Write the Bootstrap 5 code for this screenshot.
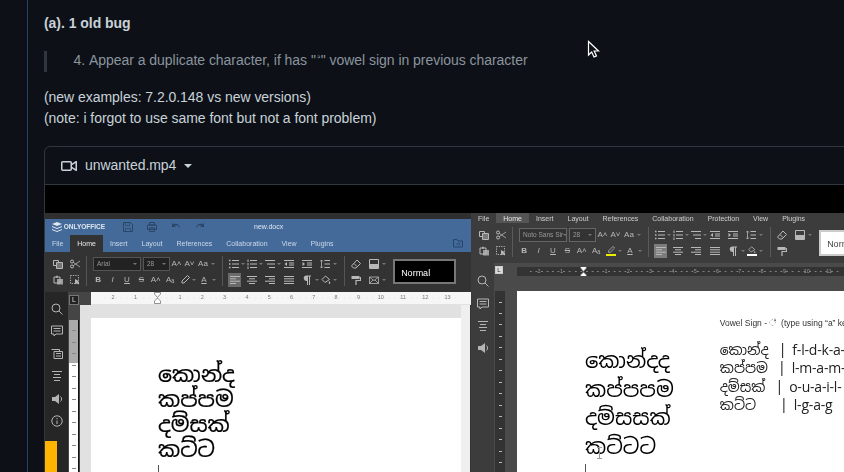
<!doctype html>
<html lang="en"><head><meta charset="utf-8">
<link href="https://cdn.jsdelivr.net/npm/bootstrap@5.3.0/dist/css/bootstrap.min.css" rel="stylesheet">
<style>
html,body{height:472px;overflow:hidden}
body{background:#0d1117;color:#c9d1d9;font:14px/21px "Liberation Sans",sans-serif;letter-spacing:-.04px}
.shell{position:relative;height:472px;margin-left:27px;border-left:1px solid #24426e;padding:13px 0 0 16px;overflow:hidden}
.doc{width:900px}
.doc p{margin:0 0 17px}
.lede{font-weight:700}
.quote{display:flow-root;border-left:3.5px solid #30363d;padding-left:14px;margin:0 0 15px;color:#8b949e}
.quote ol{margin:-1px 0 1px;padding-left:28px}
.hal{line-height:1;font-size:12px;letter-spacing:0;display:inline-block;height:12px;margin:0 1px;vertical-align:baseline;overflow:visible}
.vbox{border:1px solid #30363d;border-radius:6px 6px 0 0;overflow:hidden}
.vhead{height:38px;padding:0 16px;border-bottom:1px solid #30363d}
.vhead svg{width:16px;height:16px;fill:#c9d1d9}
.dcaret{width:0;height:0;border:4px solid transparent;border-top-color:#c9d1d9;border-bottom:0}
.vid{background:#000;height:287px;padding-top:28px;overflow:hidden;filter:blur(.45px);letter-spacing:0}
.win{--bar:#333;--fg:#b8b8b8;--side:#262626;--rbg:#454545;--gut:#e1e1e1;--band:#f6f6f6;--rtx:#777;--sep:#555;flex:none;display:flex;flex-direction:column;font-size:7px;line-height:1;color:var(--fg);overflow:hidden}
.wa{width:426px;background:#333}
.wb{width:420px;--bar:#3c3c3c;--side:#3c3c3c;--rbg:#4a4a4a;--gut:#4a4a4a;--band:#333;--rtx:#999;--sep:#5a5a5a;background:#3c3c3c}
.strip{height:6px;background:#2f2f2f}
.ttl{height:16px;background:#446a9a;color:#dfe7f0;flex:none}
.brand{width:64px;margin-left:7px;font-weight:700;font-size:6.5px;white-space:nowrap}
.ttl svg{width:10px;height:10px;flex:none}
.qa{width:24px;text-align:center;flex:none;color:#2b4566}
.fname{margin-left:42px}
.tabs{height:17px;background:#446a9a;padding-left:7px;gap:14px;color:#cbd8e8;flex:none}
.wb .tabs{height:10px;background:#3c3c3c;color:#cfcfcf;overflow:hidden}
.tab{height:100%;display:flex;align-items:center;white-space:nowrap}
.tab-on{background:#333;color:#e8e8e8;padding:0 7px;margin:0 -7px}
.wb .tab-on{background:#555}
.fold{margin-left:auto;margin-right:8px;width:10px;height:10px;color:#24466f}
.tb{height:40px;background:var(--bar);flex:none;align-items:flex-start}
.sepv{width:1px;height:30px;margin-top:4px;background:var(--sep);flex:none}
.sep-a{margin-left:3px}
.sep-b{margin-left:6px}
.grp{padding-top:5px;flex:none}
.grp-b{margin-left:4px}
.grp-c{margin-left:5px}
.rw{display:flex;height:14px;margin-bottom:2px;align-items:center}
.ce{flex:none;display:flex;align-items:center;justify-content:center;height:14px;font-size:8px;white-space:nowrap}
.ce svg{width:10px;height:10px}
.w4{width:4px}.w5{width:5px}.w6{width:6px}.w12{width:12px}.w13{width:13px}.w14{width:14px}.w14b{width:14.4px}.w17{width:17px}
.ct{width:0;height:0;border:2px solid transparent;border-top-color:#777;border-bottom:0}
.cmb{height:14px;background:#222;border:1px solid #555;flex:none;display:flex;align-items:center;justify-content:space-between;padding:0 3px;color:#999;font-size:6.5px;overflow:hidden;white-space:nowrap}
.wb .cmb{background:#333;border-color:#666}
.cmb1{width:48px;margin:0 2px}.cmb2{width:27px;margin-right:0}
.act{background:#6a6a6a}
.wb .act{background:#7c7c7c}
.hiy svg{border-bottom:2px solid #ee0}
.hiw svg{border-bottom:2px solid #fff}
.stylebox{flex:none;width:63px;height:25px;margin:7px 0 0 6px;background:#000;border:2px solid #777;color:#fff;font-size:9px;padding:8px 0 0 6px}
.wb .stylebox{background:#fff;border-color:#ccc;color:#444;height:26px;width:60px}
.ws{flex:1 1 auto;min-height:0}
.sb{width:23px;flex:none;background:var(--side);padding-top:6px;display:flex;flex-direction:column}
.wb .sb{padding-top:7px}
.sbi{height:22.4px;display:flex;align-items:center;justify-content:center;flex:none;color:#b5b5b5}
.sbi svg{width:12px;height:12px}
.yel{margin-top:auto;width:12px;height:31px;background:#ffb400;flex:none}
.rt{flex:1 1 auto;display:flex;flex-direction:column;min-width:0}
.rrow{height:13px;display:flex;flex:none;background:var(--gut)}
.corner{width:23px;flex:none;background:var(--rbg);padding:3px 0 0 1px}
.lmark{width:10px;height:10px;background:#222;border:1px solid #777;color:#ddd;font-size:7px;line-height:8px;text-align:center;display:block}
.wb .lmark{background:#ddd;color:#222;border-color:#ccc;height:8px;width:8px;font-size:6px;line-height:6px}
.band{flex:1 1 auto;height:12px;background:var(--band);color:var(--rtx);font-size:5.5px;padding-left:11px;display:flex;align-items:center;overflow:hidden}
.wb .band{margin-top:4px;height:9px;padding-left:11px}
.nm{flex:none;width:22.3px;text-align:center;height:100%;display:flex;align-items:center;justify-content:center;background:radial-gradient(circle,var(--rtx) 0 .4px,transparent .7px) 0 50%/5.6px 100% repeat-x}
.nm svg{width:7px;height:12px}
.prow{flex:1 1 auto;display:flex;min-height:0}
.vrul{width:12px;flex:none;background:var(--rbg);padding:15px 1px 0 1px}
.vrin{height:100%;border-right:1px solid #111;background:repeating-linear-gradient(#0000 0 10.5px,#888 10.5px 11.5px) 50% 0/4px 100% no-repeat,linear-gradient(#aaa 0 43px,#fff 43px)}
.wb .vrin{border:0;background:repeating-linear-gradient(#0000 0 10.5px,#bbb 10.5px 11.5px) 50% 0/3px 100% no-repeat,#333}
.pw{flex:1 1 auto;background:var(--gut);padding:13px 0 0 11px;min-width:0}
.wb .pw{padding:15px 0 0 11px}
.pg{background:#fff;height:100%;color:#000;position:relative;font-family:"Noto Sans Sinhala","Noto Sans","Liberation Sans",sans-serif;white-space:nowrap;overflow:hidden}
.sbar{width:9px;flex:none;background:#efefef;margin-right:1px}
.ta{padding:44px 0 0 67px;font-size:22px;line-height:25px;-webkit-text-stroke:.2px #000}
.caretline{width:1px;height:12px;background:#555;margin-top:3px}
.pb{display:flex;padding-left:68px;gap:46px}
.tb1{font-size:21px;line-height:28.5px;padding-top:56px}
.tb2{padding-top:26px;font-size:14px;line-height:18.4px;color:#222}
.vow{font:8.5px/12px "Liberation Sans",sans-serif;margin-bottom:12px;color:#333}
.latn{font-family:"Open Sans",sans-serif;letter-spacing:-.2px}
.pp{margin:0 6px 0 10px}
.pp4{margin:0 6px 0 24px}
.ibeam{position:absolute;left:79px;top:156px;width:7px;height:12px;color:#999}
.ptr{position:absolute;left:559px;top:40px;width:13px;height:19px}
</style></head><body>
<svg width="0" height="0" class="d-none">
<symbol id="v" viewBox="0 0 16 16"><path d="M16 3.75v8.5a.75.75 0 0 1-1.136.643L11 10.575v.675A1.75 1.75 0 0 1 9.25 13h-7.5A1.75 1.75 0 0 1 0 11.25v-6.5C0 3.784.784 3 1.75 3h7.5c.966 0 1.75.784 1.75 1.75v.675l3.864-2.318A.75.75 0 0 1 16 3.75Zm-6.5 1a.25.25 0 0 0-.25-.25h-7.5a.25.25 0 0 0-.25.25v6.5c0 .138.112.25.25.25h7.5a.25.25 0 0 0 .25-.25v-6.5ZM11 8.825l3.5 2.1v-5.85l-3.5 2.1Z"/></symbol>
<symbol id="cp" viewBox="0 0 10 10"><path d="M.5 1.5h5v2M3.500 3.500h6v6h-6zM.5 1.500v5h3" fill="none" stroke="currentColor"/><path d="M4 4h5v5H4z" fill="currentColor" opacity=".5"/></symbol>
<symbol id="ct" viewBox="0 0 10 10"><circle cx="2" cy="2.500" r="1.500" fill="none" stroke="currentColor"/><circle cx="2" cy="7.500" r="1.500" fill="none" stroke="currentColor"/><path d="M3.200 3.300 10 8M3.200 6.700 10 2" fill="none" stroke="currentColor" stroke-width=".8"/></symbol>
<symbol id="pa" viewBox="0 0 10 10"><path d="M1 2h6v6H1z" fill="none" stroke="currentColor"/><path d="M3 .8h2v2H3zM4 4h6v5.500H4z" fill="currentColor" opacity=".8"/></symbol>
<symbol id="sl" viewBox="0 0 10 10"><path d="M.5.500h8v8h-8z" fill="none" stroke="currentColor" stroke-dasharray="1.200 1.200"/><path d="M5 4v5.500l1.500-1.500 2 1.500.8-1-1.800-1.500 1.500-.7z" fill="currentColor"/></symbol>
<symbol id="ls" viewBox="0 0 10 10"><path d="M0 1.500h1.500M0 5h1.500M0 8.500h1.500" stroke="currentColor" stroke-width="1.300"/><path d="M3 1.500h7M3 5h7M3 8.500h7" stroke="currentColor"/></symbol>
<symbol id="ln" viewBox="0 0 10 10"><path d="M1 .5v2.500M1 4v2.500M1 7.500V10" stroke="currentColor"/><path d="M3 1.500h7M3 5h7M3 8.500h7" stroke="currentColor"/></symbol>
<symbol id="lm" viewBox="0 0 10 10"><path d="M0 1.500h10M2 5h8M4 8.500h6" stroke="currentColor"/></symbol>
<symbol id="ou" viewBox="0 0 10 10"><path d="M0 1.500h10M5 4h5M5 6h5M0 8.500h10" stroke="currentColor"/><path d="M3 3v4L.5 5z" fill="currentColor"/></symbol>
<symbol id="in" viewBox="0 0 10 10"><path d="M0 1.500h10M5 4h5M5 6h5M0 8.500h10" stroke="currentColor"/><path d="M.5 3v4L3 5z" fill="currentColor"/></symbol>
<symbol id="sp" viewBox="0 0 10 10"><path d="M1.500 1v8M0 2.500 1.500 1 3 2.500M0 7.500 1.500 9 3 7.500" fill="none" stroke="currentColor" stroke-width=".8"/><path d="M4.500 1.500H10M4.500 5H10M4.500 8.500H10" stroke="currentColor"/></symbol>
<symbol id="al" viewBox="0 0 10 10"><path d="M0 1.500h10M0 3.800h6M0 6.200h10M0 8.500h6" stroke="currentColor"/></symbol>
<symbol id="ac" viewBox="0 0 10 10"><path d="M0 1.500h10M2 3.800h6M0 6.200h10M2 8.500h6" stroke="currentColor"/></symbol>
<symbol id="ar" viewBox="0 0 10 10"><path d="M0 1.500h10M4 3.800h6M0 6.200h10M4 8.500h6" stroke="currentColor"/></symbol>
<symbol id="aj" viewBox="0 0 10 10"><path d="M0 1.500h10M0 3.800h10M0 6.200h10M0 8.500h10" stroke="currentColor"/></symbol>
<symbol id="pr" viewBox="0 0 10 10"><path d="M4 .5h5v1H8V10H7V1.500H6V10H5V6a3 2.800 0 0 1-1-5.500z" fill="currentColor"/></symbol>
<symbol id="sh" viewBox="0 0 10 10"><path d="M4.500 1 1 4.500 4 7.500 8.500 4.500z" fill="none" stroke="currentColor"/><path d="M8.500 6c-1 1.500-1 3 0 3s1-1.500 0-3z" fill="currentColor"/></symbol>
<symbol id="er" viewBox="0 0 10 10"><path d="M6 1 9.500 4.500 5 9H2.500L.5 7z" fill="none" stroke="currentColor"/><path d="M3 4.500 6 7.500" stroke="currentColor"/></symbol>
<symbol id="cs" viewBox="0 0 10 10"><path d="M.5.500h9v9h-9z" fill="none" stroke="currentColor"/><path d="M1 5h8v4H1z" fill="currentColor"/></symbol>
<symbol id="pb" viewBox="0 0 10 10"><path d="M.5 1h8v3h-8z" fill="currentColor"/><path d="M8.500 2.500h1v3H5V10" fill="none" stroke="currentColor" stroke-width="1.200"/></symbol>
<symbol id="ml" viewBox="0 0 10 10"><path d="M.5 2h9v6.500h-9zM.5 2 5 5.500 9.500 2M.5 8.500 4 5M9.500 8.500 6 5" fill="none" stroke="currentColor" stroke-width=".8"/></symbol>
<symbol id="pn" viewBox="0 0 10 10"><path d="M7.500 .5 9.500 2.500 4 8H2V6z" fill="none" stroke="currentColor"/></symbol>
<symbol id="se" viewBox="0 0 12 12"><circle cx="5" cy="5" r="4" fill="none" stroke="currentColor"/><path d="M8 8l3.500 3.500" stroke="currentColor"/></symbol>
<symbol id="cm" viewBox="0 0 12 12"><path d="M.5 1h11v8H5L3 11V9H.5z" fill="none" stroke="currentColor"/><path d="M2.500 3.500h7M2.500 6h7" stroke="currentColor"/></symbol>
<symbol id="cc" viewBox="0 0 12 12"><path d="M.5 1.500h8v2M3 3.500h8.500v7H3z" fill="none" stroke="currentColor"/><path d="M5 5.500h5M5 8h5" stroke="currentColor"/></symbol>
<symbol id="hd" viewBox="0 0 12 12"><path d="M1 1.500h10M3 4.500h6M2 7.500h8M3 10.500h6" stroke="currentColor"/></symbol>
<symbol id="sk" viewBox="0 0 12 12"><path d="M1 4h3l4-3v10L4 8H1z" fill="currentColor"/><path d="M9.500 3.500c1.500 1.500 1.500 3.500 0 5" fill="none" stroke="currentColor"/></symbol>
<symbol id="nf" viewBox="0 0 12 12"><circle cx="6" cy="6" r="5.200" fill="none" stroke="currentColor"/><path d="M6 5.500V9M6 3v1.200" stroke="currentColor"/></symbol>
<symbol id="lo" viewBox="0 0 10 10"><path d="M5 0 10 2 5 4 0 2zM0 4l5 2 5-2v1L5 7 0 5zM0 7l5 2 5-2v1l-5 2-5-2z" fill="currentColor"/></symbol>
<symbol id="sv" viewBox="0 0 10 10"><path d="M.5.500h7l2 2v7h-9z" fill="none" stroke="currentColor"/><path d="M2.500.500v3h4v-3M2.500 9.500v-3h5v3" fill="none" stroke="currentColor" stroke-width=".7"/></symbol>
<symbol id="pt" viewBox="0 0 10 10"><path d="M2.500.500h5v2.500h-5zM.5 3h9v4.500h-9zM2.500 6h5v3.500h-5z" fill="none" stroke="currentColor"/></symbol>
<symbol id="un" viewBox="0 0 10 10"><path d="M1 1v4h4L3.500 3.500C5.500 2.500 8 3.500 9 6.500 9 2.500 5 .500 2.500 2.300z" fill="currentColor"/></symbol>
<symbol id="re" viewBox="0 0 10 10"><path d="M9 1v4H5L6.500 3.500C4.500 2.500 2 3.500 1 6.500 1 2.500 5 .500 7.500 2.300z" fill="currentColor"/></symbol>
<symbol id="fo" viewBox="0 0 10 10"><path d="M.5 1.500h3.500l1 1.500h4.500v6h-9z" fill="none" stroke="currentColor"/><path d="M3 6h4M5.500 4.500 7 6 5.500 7.500" fill="none" stroke="currentColor" stroke-width=".7"/></symbol>
<symbol id="hg" viewBox="0 0 7 12"><path d="M.5.500h6v1.500L3.500 5.500.5 2zM3.500 6l3 3v2.500h-6V9z" fill="#fff" stroke="#666" stroke-width=".7"/></symbol>
</svg>
<div class="shell">
<div class="doc">
<p class="lede">(a). 1 old bug</p>
<blockquote class="quote"><ol start="4"><li>Appear a duplicate character, if has "<span class="hal">&nbsp;&#x0DCA;</span>" vowel sign in previous character</li></ol></blockquote>
<p>(new examples: 7.2.0.148 vs new versions)<br>(note: i forgot to use same font but not a font problem)</p>
<div class="vbox">
<div class="vhead d-flex align-items-center"><svg class="me-2"><use href="#v"/></svg><span>unwanted.mp4</span><span class="dcaret ms-2"></span></div>
<div class="vid d-flex">

<div class="win wa">
<div class="strip"></div>
<div class="ttl d-flex align-items-center"><span class="brand d-flex align-items-center"><svg><use href="#lo"/></svg>&nbsp;ONLYOFFICE</span><span class="qa"><svg><use href="#sv"/></svg></span><span class="qa"><svg><use href="#pt"/></svg></span><span class="qa"><svg><use href="#un"/></svg></span><span class="qa"><svg><use href="#re"/></svg></span><span class="fname">new.docx</span></div>
<div class="tabs d-flex align-items-center"><span class="tab">File</span><span class="tab tab-on">Home</span><span class="tab">Insert</span><span class="tab">Layout</span><span class="tab">References</span><span class="tab">Collaboration</span><span class="tab">View</span><span class="tab">Plugins</span><svg class="fold"><use href="#fo"/></svg></div>
<div class="tb d-flex">
<div class="grp ms-1"><div class="rw"><span class="ce w17"><svg><use href="#cp"/></svg></span><span class="ce w17"><svg><use href="#ct"/></svg></span></div><div class="rw"><span class="ce w17"><svg><use href="#pa"/></svg></span><span class="ce w17"><svg><use href="#sl"/></svg></span></div></div>
<div class="sepv sep-a"></div>
<div class="grp grp-b"><div class="rw"><span class="cmb cmb1">Arial<i class="ct"></i></span><span class="cmb cmb2">28<i class="ct"></i></span><span class="ce w13">A&#x02C4;</span><span class="ce w13">A&#x02C5;</span><span class="ce w14">Aa</span><span class="ce w5"><i class="ct"></i></span></div><div class="rw"><b class="ce w14b">B</b><i class="ce w14b">I</i><u class="ce w14b">U</u><s class="ce w14b">S</s><span class="ce w14b">A&#x02C4;</span><span class="ce w14b">A&#x2090;</span><span class="ce w14b"><svg><use href="#pn"/></svg></span><span class="ce w5"><i class="ct"></i></span><span class="ce w14b"><u>A</u></span><span class="ce w5"><i class="ct"></i></span></div></div>
<div class="sepv sep-b"></div>
<div class="grp grp-c"><div class="rw"><span class="ce w12"><svg><use href="#ls"/></svg></span><span class="ce w6"><i class="ct"></i></span><span class="ce w12"><svg><use href="#ln"/></svg></span><span class="ce w6"><i class="ct"></i></span><span class="ce w12"><svg><use href="#lm"/></svg></span><span class="ce w6"><i class="ct"></i></span><span class="ce w14"><svg><use href="#ou"/></svg></span><span class="ce w4"></span><span class="ce w14"><svg><use href="#in"/></svg></span><span class="ce w4"></span><span class="ce w14"><svg><use href="#sp"/></svg></span><span class="ce w6"><i class="ct"></i></span></div><div class="rw"><span class="ce w13 act"><svg><use href="#al"/></svg></span><span class="ce w5"></span><span class="ce w12"><svg><use href="#ac"/></svg></span><span class="ce w6"></span><span class="ce w12"><svg><use href="#ar"/></svg></span><span class="ce w6"></span><span class="ce w14"><svg><use href="#aj"/></svg></span><span class="ce w4"></span><span class="ce w14"><svg><use href="#pr"/></svg></span><span class="ce w6"><i class="ct"></i></span><span class="ce w12"><svg><use href="#sh"/></svg></span><span class="ce w6"><i class="ct"></i></span></div></div>
<div class="sepv sep-b"></div>
<div class="grp ms-1"><div class="rw"><span class="ce w14"><svg><use href="#er"/></svg></span><span class="ce w4"></span><span class="ce w14"><svg><use href="#cs"/></svg></span><span class="ce w6"><i class="ct"></i></span></div><div class="rw"><span class="ce w14"><svg><use href="#pb"/></svg></span><span class="ce w4"></span><span class="ce w14"><svg><use href="#ml"/></svg></span><span class="ce w6"><i class="ct"></i></span></div></div>
<div class="stylebox">Normal</div>
</div>
<div class="ws d-flex">
<div class="sb"><span class="sbi"><svg><use href="#se"/></svg></span><span class="sbi"><svg><use href="#cm"/></svg></span><span class="sbi"><svg><use href="#cc"/></svg></span><span class="sbi"><svg><use href="#hd"/></svg></span><span class="sbi"><svg><use href="#sk"/></svg></span><span class="sbi"><svg><use href="#nf"/></svg></span><span class="yel"></span></div>
<div class="rt">
<div class="rrow"><div class="corner"><span class="lmark">L</span></div><div class="band"><span class="nm">2</span><span class="nm">1</span><span class="nm"><svg><use href="#hg"/></svg></span><span class="nm">1</span><span class="nm">2</span><span class="nm">3</span><span class="nm">4</span><span class="nm">5</span><span class="nm">6</span><span class="nm">7</span><span class="nm">8</span><span class="nm">9</span><span class="nm">10</span><span class="nm">11</span><span class="nm">12</span><span class="nm">13</span></div></div>
<div class="prow"><div class="vrul"><div class="vrin"></div></div><div class="pw"><div class="pg"><div class="ta">කොන්ද<br>කප්පම<br>දම්සක්<br>කට්ට<div class="caretline"></div></div></div></div><div class="sbar"></div></div>
</div></div>
</div>

<div class="win wb">
<div class="tabs d-flex align-items-center"><span class="tab">File</span><span class="tab tab-on">Home</span><span class="tab">Insert</span><span class="tab">Layout</span><span class="tab">References</span><span class="tab">Collaboration</span><span class="tab">Protection</span><span class="tab">View</span><span class="tab">Plugins</span></div>
<div class="tb d-flex">
<div class="grp ms-1"><div class="rw"><span class="ce w17"><svg><use href="#cp"/></svg></span><span class="ce w17"><svg><use href="#ct"/></svg></span></div><div class="rw"><span class="ce w17"><svg><use href="#pa"/></svg></span><span class="ce w17"><svg><use href="#sl"/></svg></span></div></div>
<div class="sepv sep-a"></div>
<div class="grp grp-b"><div class="rw"><span class="cmb cmb1">Noto Sans Sir<i class="ct"></i></span><span class="cmb cmb2">28<i class="ct"></i></span><span class="ce w13">A&#x02C4;</span><span class="ce w13">A&#x02C5;</span><span class="ce w14">Aa</span><span class="ce w5"><i class="ct"></i></span></div><div class="rw"><b class="ce w14b">B</b><i class="ce w14b">I</i><u class="ce w14b">U</u><s class="ce w14b">S</s><span class="ce w14b">A&#x02C4;</span><span class="ce w14b">A&#x2090;</span><span class="ce w14b hiy"><svg><use href="#pn"/></svg></span><span class="ce w5"><i class="ct"></i></span><span class="ce w14b"><u>A</u></span><span class="ce w5"><i class="ct"></i></span></div></div>
<div class="sepv sep-b"></div>
<div class="grp grp-c"><div class="rw"><span class="ce w12"><svg><use href="#ls"/></svg></span><span class="ce w6"><i class="ct"></i></span><span class="ce w12"><svg><use href="#ln"/></svg></span><span class="ce w6"><i class="ct"></i></span><span class="ce w12"><svg><use href="#lm"/></svg></span><span class="ce w6"><i class="ct"></i></span><span class="ce w14"><svg><use href="#ou"/></svg></span><span class="ce w4"></span><span class="ce w14"><svg><use href="#in"/></svg></span><span class="ce w4"></span><span class="ce w14"><svg><use href="#sp"/></svg></span><span class="ce w6"><i class="ct"></i></span></div><div class="rw"><span class="ce w13 act"><svg><use href="#al"/></svg></span><span class="ce w5"></span><span class="ce w12"><svg><use href="#ac"/></svg></span><span class="ce w6"></span><span class="ce w12"><svg><use href="#ar"/></svg></span><span class="ce w6"></span><span class="ce w14"><svg><use href="#aj"/></svg></span><span class="ce w4"></span><span class="ce w14"><svg><use href="#pr"/></svg></span><span class="ce w6"><i class="ct"></i></span><span class="ce w12 hiw"><svg><use href="#sh"/></svg></span><span class="ce w6"><i class="ct"></i></span></div></div>
<div class="sepv sep-b"></div>
<div class="grp ms-1"><div class="rw"><span class="ce w14"><svg><use href="#er"/></svg></span><span class="ce w4"></span><span class="ce w14"><svg><use href="#cs"/></svg></span><span class="ce w6"><i class="ct"></i></span></div><div class="rw"><span class="ce w14"><svg><use href="#pb"/></svg></span></div></div>
<div class="stylebox">Normal</div>
</div>
<div class="ws d-flex">
<div class="sb"><span class="sbi"><svg><use href="#se"/></svg></span><span class="sbi"><svg><use href="#cm"/></svg></span><span class="sbi"><svg><use href="#hd"/></svg></span><span class="sbi"><svg><use href="#sk"/></svg></span></div>
<div class="rt">
<div class="rrow"><div class="corner"><span class="lmark">L</span></div><div class="band"><span class="nm">2</span><span class="nm">1</span><span class="nm"><svg><use href="#hg"/></svg></span><span class="nm">1</span><span class="nm">2</span><span class="nm">3</span><span class="nm">4</span><span class="nm">5</span><span class="nm">6</span><span class="nm">7</span><span class="nm">8</span><span class="nm">9</span><span class="nm">10</span><span class="nm">11</span></div></div>
<div class="prow"><div class="vrul"><div class="vrin"></div></div><div class="pw"><div class="pg"><div class="pb"><div class="tb1">කොන්දද<br>කප්පපම<br>දම්සසක්<br>කට්ටට<div class="caretline"></div></div><div class="tb2"><div class="vow">Vowel Sign - &#x0DCA; &nbsp;(type using “a” key)</div><div>කොන්ද<span class="pp">|</span><span class="latn">f-l-d-k-a-</span><br>කප්පම<span class="pp">|</span><span class="latn">l-m-a-m-</span><br>දම්සක්<span class="pp">|</span><span class="latn">o-u-a-i-l-</span><br>කට්ට<span class="pp4">|</span><span class="latn">l-g-a-g</span></div></div></div><svg class="ibeam" viewBox="0 0 7 12"><path d="M1 .5h5M3.500.5v11M1 11.500h5" fill="none" stroke="currentColor"/></svg></div></div></div>
</div></div>
</div>

</div>
</div>
</div>
<svg class="ptr" viewBox="0 0 13 19"><path d="M1.500 1.500v13.500l3.200-3 2.300 5 2.500-1.100-2.300-4.900h4.300z" fill="#0d1117" stroke="#fff" stroke-width="1.200"/></svg>
</div>
<script src="https://cdn.jsdelivr.net/npm/bootstrap@5.3.0/dist/js/bootstrap.bundle.min.js"></script>
</body></html>
